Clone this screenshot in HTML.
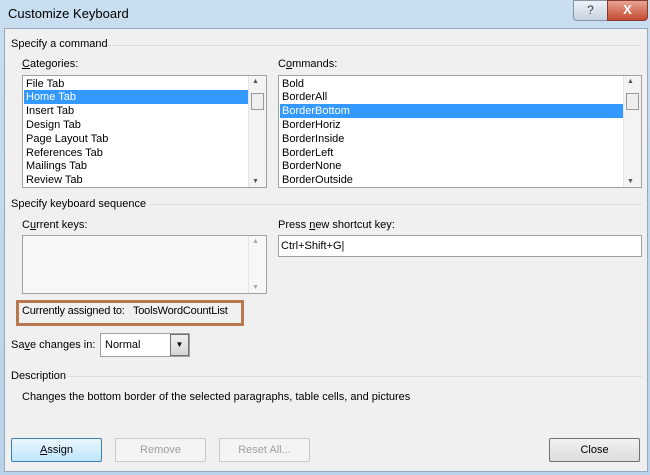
<html><head><style>
body{margin:0;width:650px;height:475px;overflow:hidden;background:linear-gradient(#c9dff0,#b7d2ea);font-family:"Liberation Sans",sans-serif;font-size:11px;color:#000;position:relative}
.a{position:absolute}
.p{left:4px;top:28px;width:642px;height:442px;background:#f0f0f0;border:1px solid #9aa9b8}
.box{background:#fff;border:1px solid #a0a0a0}
.it{position:absolute;left:3px;height:14px;line-height:15px}
.sel{background:#3399ff;color:#fff;left:1px!important;padding-left:2px;width:222px}
.sb{position:absolute;right:0;top:0;bottom:0;width:17px;background:#f3f3f3;border-left:1px solid #e4e4e4}
.btn{position:absolute;top:438px;height:22px;width:89px;border:1px solid #707070;background:linear-gradient(#f2f2f2,#dcdcdc);border-radius:2px;text-align:center;line-height:22px}
.dis{color:#a0a0a0;border-color:#c8c8c8;background:#f4f4f4}
.line{position:absolute;height:1px;background:#dcdcdc}
</style></head><body>
<div class="a" style="left:8px;top:6px;font-size:13px">Customize Keyboard</div>
<div class="a" style="left:573px;top:0;width:33px;height:19px;background:linear-gradient(#eef3f8,#c7d3df);border:1px solid #8796a6;border-radius:0 0 0 4px;text-align:center;font-size:12px;color:#444;line-height:18px">?</div>
<div class="a" style="left:607px;top:0;width:39px;height:19px;background:linear-gradient(#e9a393,#c44a30);border:1px solid #8a3a2a;border-radius:0 0 4px 0;text-align:center;color:#fff;font-weight:bold;font-size:13px;line-height:18px">X</div>
<div class="a p"></div>
<div class="a" style="left:11px;top:38px">Specify a command</div><div class="line" style="left:108px;top:45px;width:534px"></div>
<div class="a" style="left:22px;top:58px"><u>C</u>ategories:</div>
<div class="a" style="left:278px;top:58px">C<u>o</u>mmands:</div>
<div class="a box" style="left:22px;top:75px;width:243px;height:111px">
<div class="it" style="top:1px">File Tab</div><div class="it sel" style="top:14px">Home Tab</div><div class="it" style="top:28px">Insert Tab</div><div class="it" style="top:42px">Design Tab</div><div class="it" style="top:56px">Page Layout Tab</div><div class="it" style="top:70px">References Tab</div><div class="it" style="top:83px">Mailings Tab</div><div class="it" style="top:97px">Review Tab</div>
<div class="sb"><div class="a" style="left:3px;top:2px;font-size:7px;color:#555">▲</div><div class="a" style="left:2px;top:17px;width:11px;height:15px;border:1px solid #999;background:#eee"></div><div class="a" style="left:3px;bottom:2px;font-size:7px;color:#555">▼</div></div></div>
<div class="a box" style="left:278px;top:75px;width:362px;height:111px">
<div class="it" style="top:1px">Bold</div><div class="it" style="top:14px">BorderAll</div><div class="it sel" style="top:28px;width:341px">BorderBottom</div><div class="it" style="top:42px">BorderHoriz</div><div class="it" style="top:56px">BorderInside</div><div class="it" style="top:70px">BorderLeft</div><div class="it" style="top:83px">BorderNone</div><div class="it" style="top:97px">BorderOutside</div>
<div class="sb"><div class="a" style="left:3px;top:2px;font-size:7px;color:#555">▲</div><div class="a" style="left:2px;top:17px;width:11px;height:15px;border:1px solid #999;background:#eee"></div><div class="a" style="left:3px;bottom:2px;font-size:7px;color:#555">▼</div></div></div>
<div class="a" style="left:11px;top:198px">Specify keyboard sequence</div><div class="line" style="left:150px;top:204px;width:492px"></div>
<div class="a" style="left:22px;top:219px">C<u>u</u>rrent keys:</div>
<div class="a" style="left:278px;top:219px">Press <u>n</u>ew shortcut key:</div>
<div class="a box" style="left:22px;top:235px;width:243px;height:57px;background:#f7f7f7"><div class="sb" style="background:#f7f7f7"><div class="a" style="left:3px;top:2px;font-size:7px;color:#aaa">▲</div><div class="a" style="left:3px;bottom:2px;font-size:7px;color:#aaa">▼</div></div></div>
<div class="a box" style="left:278px;top:235px;width:362px;height:20px"><div class="a" style="left:2px;top:4px">Ctrl+Shift+G|</div></div>
<div class="a" style="left:16px;top:300px;width:222px;height:20px;border:3px solid #b8784f"></div>
<div class="a" style="left:22px;top:305px;letter-spacing:-0.2px">Currently assigned to:&nbsp;&nbsp; ToolsWordCountList</div>
<div class="a" style="left:11px;top:339px">Sa<u>v</u>e changes in:</div>
<div class="a box" style="left:100px;top:333px;width:88px;height:22px"><div class="a" style="left:4px;top:5px">Normal</div><div class="a" style="right:0;top:0;width:17px;height:20px;border:1px solid #707070;background:linear-gradient(#f0f0f0,#d6d6d6);text-align:center;font-size:8px;line-height:20px">▼</div></div>
<div class="a" style="left:11px;top:370px">Description</div><div class="line" style="left:68px;top:376px;width:574px"></div>
<div class="a" style="left:22px;top:391px">Changes the bottom border of the selected paragraphs, table cells, and pictures</div>
<div class="btn" style="left:11px;border-color:#3c7fb1;background:linear-gradient(#eaf6fd,#bee6fd)"><u>A</u>ssign</div>
<div class="btn dis" style="left:115px">Remove</div>
<div class="btn dis" style="left:219px">Reset All...</div>
<div class="btn" style="left:549px">Close</div>
</body></html>
